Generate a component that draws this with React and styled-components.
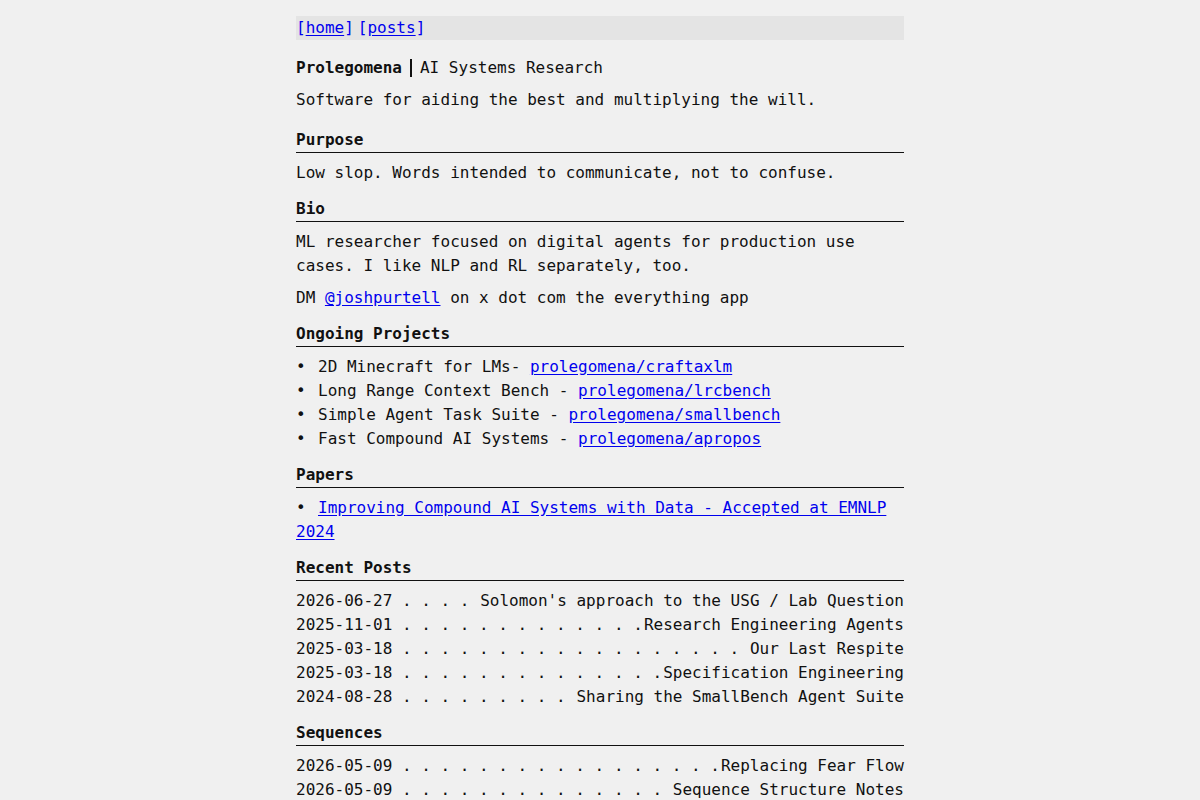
import React from "react";
import styled, { createGlobalStyle } from "styled-components";

const GlobalStyle = createGlobalStyle`
  html, body {
    margin: 0;
    padding: 0;
    background: #f0f0f0;
  }
  body {
    font-family: "DejaVu Sans Mono", "Liberation Mono", monospace;
    font-size: 16px;
    line-height: 24px;
    color: #111;
  }
`;

const Page = styled.main`
  max-width: 608px;
  margin: 0 auto;
  padding: 16px 0 40px;
`;

const Nav = styled.nav`
  background: #e4e4e4;
  height: 24px;
  display: flex;
  gap: 4px;
  color: #0000ee;
`;

const Link = styled.a`
  color: #0000ee;
  text-decoration: underline;
  text-underline-offset: 2px;
`;

const Title = styled.div`
  margin-top: 16px;
  display: flex;
  align-items: center;
  gap: 8px;

  strong {
    font-weight: bold;
  }
`;

const Bar = styled.span`
  width: 2px;
  height: 18px;
  background: #111;
  display: inline-block;
`;

const Text = styled.p`
  margin: ${(p) => p.$mt || 0}px 0 0;
`;

const Heading = styled.h2`
  font-size: 16px;
  font-weight: bold;
  margin: ${(p) => p.$mt ?? 12}px 0 8px;
  line-height: 24px;
  border-bottom: 1px solid #111;
`;

const List = styled.ul`
  list-style: none;
  margin: 0;
  padding: 0;
`;

const Item = styled.li`
  &::before {
    content: "•";
    display: inline-block;
    width: 22px;
  }
`;

const Row = styled.div`
  display: flex;
  white-space: nowrap;
`;

const Date = styled.span`
  flex: none;
`;

// dot leader between the date and the title, clipped to the free space
const Leader = styled.span`
  flex: 1;
  overflow: hidden;
  min-width: 0;
  white-space: pre;

  &::after {
    content: "${" .".repeat(60)}";
  }
`;

const PostTitle = styled.span`
  flex: none;
`;

const projects = [
  ["2D Minecraft for LMs- ", "prolegomena/craftaxlm"],
  ["Long Range Context Bench - ", "prolegomena/lrcbench"],
  ["Simple Agent Task Suite - ", "prolegomena/smallbench"],
  ["Fast Compound AI Systems - ", "prolegomena/apropos"],
];

const posts = [
  ["2026-06-27", "Solomon's approach to the USG / Lab Question"],
  ["2025-11-01", "Research Engineering Agents"],
  ["2025-03-18", "Our Last Respite"],
  ["2025-03-18", "Specification Engineering"],
  ["2024-08-28", "Sharing the SmallBench Agent Suite"],
];

const sequences = [
  ["2026-05-09", "Replacing Fear Flow"],
  ["2026-05-09", "Sequence Structure Notes"],
];

const Entries = ({ rows }) =>
  rows.map(([date, title], i) => (
    <Row key={i}>
      <Date>{date}</Date>
      <Leader />
      <PostTitle>{title}</PostTitle>
    </Row>
  ));

export default function App() {
  return (
    <>
      <GlobalStyle />
      <Page>
        <Nav>
          <span>
            [<Link href="#">home</Link>]
          </span>
          <span>
            [<Link href="#">posts</Link>]
          </span>
        </Nav>

        <Title>
          <strong>Prolegomena</strong>
          <Bar />
          <span>AI Systems Research</span>
        </Title>
        <Text $mt={8}>Software for aiding the best and multiplying the will.</Text>

        <Heading $mt={16}>Purpose</Heading>
        <Text>Low slop. Words intended to communicate, not to confuse.</Text>

        <Heading>Bio</Heading>
        <Text>
          ML researcher focused on digital agents for production use cases. I
          like NLP and RL separately, too.
        </Text>
        <Text $mt={8}>
          DM <Link href="#">@joshpurtell</Link> on x dot com the everything app
        </Text>

        <Heading>Ongoing Projects</Heading>
        <List>
          {projects.map(([label, repo]) => (
            <Item key={repo}>
              {label}
              <Link href="#">{repo}</Link>
            </Item>
          ))}
        </List>

        <Heading>Papers</Heading>
        <List>
          <Item>
            <Link href="#">
              Improving Compound AI Systems with Data - Accepted at EMNLP 2024
            </Link>
          </Item>
        </List>

        <Heading>Recent Posts</Heading>
        <Entries rows={posts} />

        <Heading>Sequences</Heading>
        <Entries rows={sequences} />
      </Page>
    </>
  );
}
